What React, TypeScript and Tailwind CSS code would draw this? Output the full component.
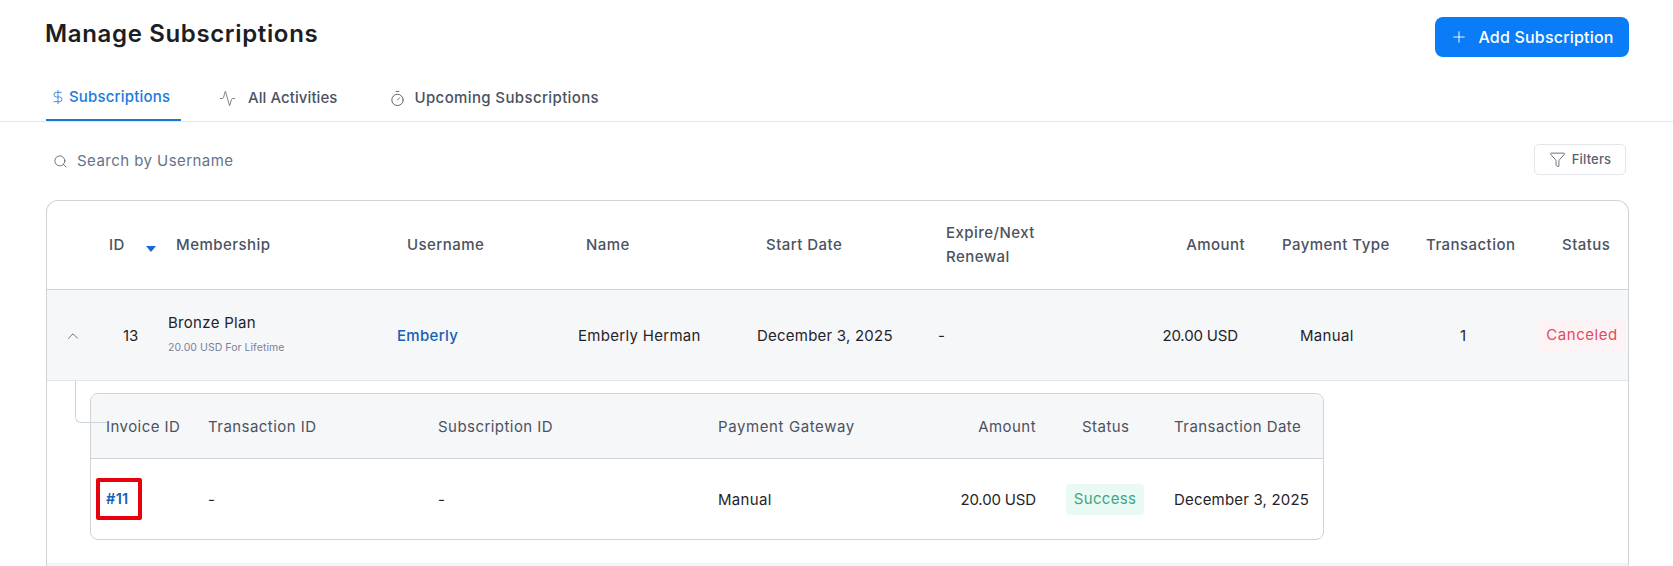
import { Activity, ChevronUp, DollarSign, Funnel, Plus, Search, Timer } from "lucide-react";

export default function App() {
    return (
        <div className="h-[566px] w-[1673px] overflow-hidden bg-white font-['Inter',sans-serif] text-[15px] tracking-[0.02em] text-[#1f2329]">
            {/* Header */}
            <div className="flex justify-between pl-[45px] pr-[44px] pt-[17px]">
                <h1 className="mt-[1px] text-[24px] font-semibold leading-[32px] tracking-[0.027em] text-[#1b1e24]">
                    Manage Subscriptions
                </h1>
                <button className="flex h-[40px] w-[194px] items-center justify-center gap-[10px] rounded-[8px] bg-[#0a7cf8] text-[16px] font-medium tracking-[0.012em] text-white">
                    <Plus size={18} strokeWidth={1.25} />
                    Add Subscription
                </button>
            </div>

            {/* Tabs */}
            <div className="mt-[18px] flex h-[47px] border-b border-[#e3e5e8] pl-[46px] text-[#4b5260]">
                <div className="flex h-[46px] w-[135px] items-center gap-[3px] border-b-[2px] border-[#1878d6] pl-[4px] font-medium tracking-[0.012em] text-[#1a7be0]">
                    <DollarSign size={16} strokeWidth={1.25} />
                    Subscriptions
                </div>
                <div className="ml-[38px] flex h-[46px] items-center gap-[12px] font-medium tracking-[0.005em]">
                    <Activity size={17} strokeWidth={1} />
                    All Activities
                </div>
                <div className="ml-[52px] flex h-[46px] items-center gap-[8px] pt-[1px] font-medium tracking-[0.025em]">
                    <Timer size={17} strokeWidth={1.25} />
                    Upcoming Subscriptions
                </div>
            </div>

            {/* Search and filters */}
            <div className="mt-[22px] flex h-[31px] items-center justify-between pl-[53px] pr-[47px]">
                <div className="flex items-center gap-[9px] pt-[3px] tracking-[0.03em] text-[#66738a]">
                    <Search size={15} strokeWidth={1.25} className="text-[#4b5260]" />
                    Search by Username
                </div>
                <button className="flex h-[31px] w-[92px] items-center justify-center gap-[6px] rounded-[5px] border border-[#e3e5e8] text-[13px] font-medium tracking-[0.012em] text-[#5a6070]">
                    <Funnel size={17} strokeWidth={1.25} />
                    Filters
                </button>
            </div>

            {/* Main table */}
            <div className="ml-[46px] mt-[25px] w-[1583px] overflow-hidden rounded-t-[12px] border border-b-0 border-[#d0d3d8]">
                <table className="w-[1581px] table-fixed border-collapse">
                    <colgroup>
                        <col className="w-[58px]" />
                        <col className="w-[52px]" />
                        <col className="w-[230px]" />
                        <col className="w-[181px]" />
                        <col className="w-[179px]" />
                        <col className="w-[181px]" />
                        <col className="w-[172px]" />
                        <col className="w-[147px]" />
                        <col className="w-[160px]" />
                        <col className="w-[123px]" />
                        <col className="w-[98px]" />
                    </colgroup>
                    <thead>
                        <tr className="h-[88px] border-b border-[#d0d3d8] text-left tracking-[0.03em] text-[#4b5260]">
                            <th className="font-medium"></th>
                            <th className="relative pl-[4px] font-medium whitespace-nowrap">
                                ID
                                <svg width="10" height="6" viewBox="0 0 10 6" className="absolute left-[41px] top-[45px]">
                                    <path d="M0 0H10L5 6Z" fill="#1a66d4" />
                                </svg>
                            </th>
                            <th className="pl-[19px] font-medium">Membership</th>
                            <th className="pl-[20px] font-medium">Username</th>
                            <th className="pl-[18px] font-medium">Name</th>
                            <th className="pl-[19px] font-medium">Start Date</th>
                            <th className="pl-[18px] font-medium leading-[24px]">
                                Expire/Next
                                <br />
                                Renewal
                            </th>
                            <th className="pr-[2px] text-right font-medium">Amount</th>
                            <th className="pl-[35px] font-medium whitespace-nowrap">Payment Type</th>
                            <th className="pl-[19px] font-medium">Transaction</th>
                            <th className="pl-[32px] font-medium">Status</th>
                        </tr>
                    </thead>
                    <tbody>
                        <tr className="h-[91px] border-b border-[#e3e5e8] bg-[#f6f7f9]">
                            <td className="pl-[17px] pt-[2px]">
                                <ChevronUp size={18} strokeWidth={1} className="text-[#3f4552]" />
                            </td>
                            <td className="pl-[18px] pt-[4px] tracking-normal">13</td>
                            <td className="pb-[2px] pl-[11px]">
                                <div className="leading-[24px]">Bronze Plan</div>
                                <div className="mt-[5px] text-[10.5px] leading-[16px] tracking-[0.005em] text-[#7b8299]">20.00 USD For Lifetime</div>
                            </td>
                            <td className="pl-[10px] pt-[4px] font-medium text-[#1560b5]">Emberly</td>
                            <td className="pl-[10px] pt-[4px]">Emberly Herman</td>
                            <td className="pl-[10px] pt-[4px] tracking-[0.015em]">December 3, 2025</td>
                            <td className="pl-[10px] pt-[4px]">-</td>
                            <td className="pr-[9px] pt-[4px] text-right tracking-[-0.01em] whitespace-nowrap">20.00 USD</td>
                            <td className="pl-[53px] pt-[4px]">Manual</td>
                            <td className="pl-[53px] pt-[4px]">1</td>
                            <td className="pl-[8px]">
                                <span className="flex h-[32px] w-[88px] items-center justify-center rounded-[4px] bg-[#fdf3f4] pt-[1px] tracking-[0.035em] text-[#e5495f]">
                                    Canceled
                                </span>
                            </td>
                        </tr>
                    </tbody>
                </table>

                {/* Nested transactions */}
                <div className="relative h-[182px] pl-[43px] pt-[12px]">
                    <div className="absolute left-[28px] top-0 h-[42px] w-[32px] rounded-bl-[6px] border-b border-l border-[#d0d3d8]" />
                    <div className="w-[1234px] overflow-hidden rounded-[8px] border border-[#d0d3d8]">
                        <table className="w-[1232px] table-fixed border-collapse">
                            <colgroup>
                                <col className="w-[102px]" />
                                <col className="w-[230px]" />
                                <col className="w-[280px]" />
                                <col className="w-[250px]" />
                                <col className="w-[83px]" />
                                <col className="w-[138px]" />
                                <col className="w-[149px]" />
                            </colgroup>
                            <thead>
                                <tr className="h-[65px] border-b border-[#d0d3d8] bg-[#f6f7f9] text-left tracking-[0.03em] text-[#4b5260]">
                                    <th className="pl-[15px] pt-[3px] font-normal whitespace-nowrap">Invoice ID</th>
                                    <th className="pl-[15px] pt-[3px] font-normal">Transaction ID</th>
                                    <th className="pl-[15px] pt-[3px] font-normal">Subscription ID</th>
                                    <th className="pl-[15px] pt-[3px] font-normal tracking-[0.04em]">Payment Gateway</th>
                                    <th className="pt-[3px] text-right font-normal">Amount</th>
                                    <th className="pl-[46px] pt-[3px] font-normal">Status</th>
                                    <th className="pt-[3px] font-normal whitespace-nowrap">Transaction Date</th>
                                </tr>
                            </thead>
                            <tbody>
                                <tr className="h-[80px]">
                                    <td className="pl-[5px]">
                                        <span className="flex h-[42px] w-[46px] items-center rounded-[2px] border-[4px] border-[#e8000c] pl-[6px] pt-[1px] text-[14.5px] font-semibold text-[#1560b5]">
                                            #11
                                        </span>
                                    </td>
                                    <td className="pl-[15px] pt-[3px]">-</td>
                                    <td className="pl-[15px] pt-[3px]">-</td>
                                    <td className="pl-[15px] pt-[3px]">Manual</td>
                                    <td className="pt-[3px] text-right tracking-[-0.01em] whitespace-nowrap">20.00 USD</td>
                                    <td className="pl-[30px] pt-[1px]">
                                        <span className="flex h-[31px] w-[78px] items-center justify-center rounded-[4px] bg-[#e9f9f3] text-[#3fa583]">
                                            Success
                                        </span>
                                    </td>
                                    <td className="pt-[3px] tracking-[0.012em] whitespace-nowrap">December 3, 2025</td>
                                </tr>
                            </tbody>
                        </table>
                    </div>
                </div>
                <div className="h-[10px] bg-[#f3f4f6]" />
            </div>
        </div>
    );
}
